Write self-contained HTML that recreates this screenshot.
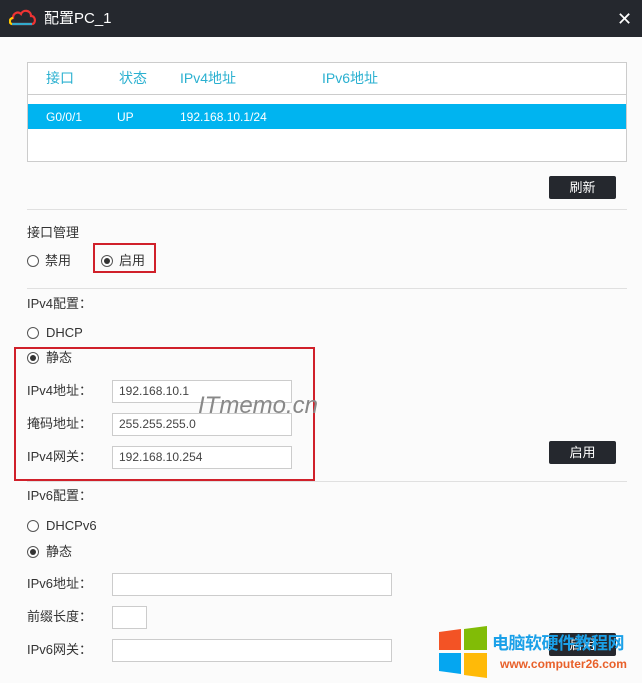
<!DOCTYPE html>
<html><head><meta charset="utf-8"><style>
*{margin:0;padding:0;box-sizing:border-box}
body{width:642px;height:683px;background:#fbfbfb;font-family:"Liberation Sans","Noto Sans CJK SC",sans-serif;font-size:13px;color:#333;position:relative;overflow:hidden}
.a{position:absolute;line-height:16px}
.title{left:0;top:0;width:642px;height:37px;background:#25282e;color:#fff;font-size:15px}
.btn{background:#25282e;color:#fff;border-radius:2px;text-align:center;line-height:23px;font-size:13px}
.hr{left:27px;width:600px;height:1px;background:#e0e0e0}
.in{background:#fff;border:1px solid #ccc;height:23px;line-height:21px;padding-left:6px;color:#444;font-size:12px}
.rad{width:12px;height:12px;border:1px solid #555;border-radius:50%;background:#fff}
.rad.on::after{content:"";position:absolute;left:2px;top:2px;width:6px;height:6px;border-radius:50%;background:#333}
.red{border:2px solid #d0202a}
</style></head><body>
<div class="a title">
<svg class="a" style="left:9px;top:8px" width="28" height="20" viewBox="0 0 28 20"><path d="M3 16 C0 16 0 10 4 10 C4 5 9 3 12 6 C14 1 22 2 22 8 C27 8 27 16 23 16 Z" fill="none" stroke="#e33" stroke-width="2.2"/><path d="M3 16 L23 16" stroke="#3ac" stroke-width="2.2"/><path d="M3 16 C0 16 0 10 4 10" stroke="#fc0" stroke-width="2.2" fill="none"/></svg>
<div class="a" style="left:44px;top:11px;font-size:15px">配置PC_1</div>
<div class="a" style="left:617px;top:11px;font-size:18px">✕</div>
</div>
<div class="a" style="left:27px;top:62px;width:600px;height:100px;border:1px solid #ccc;background:#fff"></div>
<div class="a" style="left:28px;top:94px;width:598px;height:1px;background:#ccc"></div>
<div class="a" style="left:28px;top:104px;width:598px;height:25px;background:#00b4f0"></div>
<div class="a" style="left:46px;top:70px;color:#2ab0d0;font-size:14px">接口</div>
<div class="a" style="left:119px;top:70px;color:#2ab0d0;font-size:14px">状态</div>
<div class="a" style="left:180px;top:70px;color:#2ab0d0;font-size:14px">IPv4地址</div>
<div class="a" style="left:322px;top:70px;color:#2ab0d0;font-size:14px">IPv6地址</div>
<div class="a" style="left:46px;top:109px;color:#fff;font-size:12px">G0/0/1</div>
<div class="a" style="left:117px;top:109px;color:#fff;font-size:12px">UP</div>
<div class="a" style="left:180px;top:109px;color:#fff;font-size:12px">192.168.10.1/24</div>
<div class="a btn" style="left:549px;top:176px;width:67px;height:23px">刷新</div>
<div class="a hr" style="top:209px"></div>
<div class="a" style="left:27px;top:225px">接口管理</div>
<div class="a rad" style="left:27px;top:255px"></div><div class="a" style="left:45px;top:253px">禁用</div>
<div class="a red" style="left:93px;top:243px;width:63px;height:30px"></div>
<div class="a rad on" style="left:101px;top:255px"></div><div class="a" style="left:119px;top:253px">启用</div>
<div class="a hr" style="top:288px"></div>
<div class="a" style="left:27px;top:296px">IPv4配置：</div>
<div class="a rad" style="left:27px;top:327px"></div><div class="a" style="left:46px;top:325px">DHCP</div>
<div class="a red" style="left:14px;top:347px;width:301px;height:134px"></div>
<div class="a rad on" style="left:27px;top:352px"></div><div class="a" style="left:46px;top:350px">静态</div>
<div class="a" style="left:27px;top:383px">IPv4地址：</div>
<div class="a in" style="left:112px;top:380px;width:180px">192.168.10.1</div>
<div class="a" style="left:27px;top:416px">掩码地址：</div>
<div class="a in" style="left:112px;top:413px;width:180px">255.255.255.0</div>
<div class="a" style="left:27px;top:449px">IPv4网关：</div>
<div class="a in" style="left:112px;top:446px;width:180px">192.168.10.254</div>
<div class="a" style="left:198px;top:393px;font-size:24px;line-height:26px;font-style:italic;color:#888">ITmemo.cn</div>
<div class="a btn" style="left:549px;top:441px;width:67px;height:23px">启用</div>
<div class="a hr" style="top:481px"></div>
<div class="a" style="left:27px;top:488px">IPv6配置：</div>
<div class="a rad" style="left:27px;top:520px"></div><div class="a" style="left:46px;top:518px">DHCPv6</div>
<div class="a rad on" style="left:27px;top:546px"></div><div class="a" style="left:46px;top:544px">静态</div>
<div class="a" style="left:27px;top:576px">IPv6地址：</div>
<div class="a in" style="left:112px;top:573px;width:280px"></div>
<div class="a" style="left:27px;top:609px">前缀长度：</div>
<div class="a in" style="left:112px;top:606px;width:35px"></div>
<div class="a" style="left:27px;top:642px">IPv6网关：</div>
<div class="a in" style="left:112px;top:639px;width:280px"></div>
<div class="a btn" style="left:549px;top:633px;width:67px;height:23px">启用</div>
<svg class="a" style="left:437px;top:626px" width="52" height="52" viewBox="0 0 52 52"><path d="M2 6 L24 3 V24 H2Z" fill="#f35325"/><path d="M27 3 L50 0 V24 H27Z" fill="#81bc06"/><path d="M2 27 H24 V48 L2 45Z" fill="#05a6f0"/><path d="M27 27 H50 V52 L27 49Z" fill="#ffba08"/></svg>
<div class="a" style="left:492px;top:634px;font-size:17px;line-height:20px;font-weight:bold;color:#1aa0e8;letter-spacing:-0.5px">电脑软硬件教程网</div>
<div class="a" style="left:500px;top:656px;font-size:12px;font-weight:bold;color:#e8602a">www.computer26.com</div>
</body></html>
